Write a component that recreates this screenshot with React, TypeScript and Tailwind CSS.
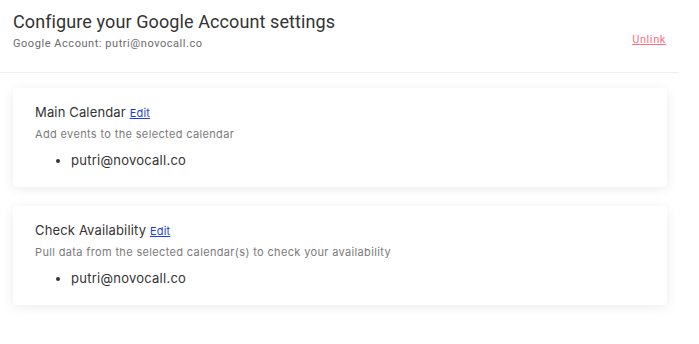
export default function App() {
  const calendars = [
    {
      title: 'Main Calendar',
      description: 'Add events to the selected calendar',
      emails: ['putri@novocall.co'],
    },
    {
      title: 'Check Availability',
      description: 'Pull data from the selected calendar(s) to check your availability',
      emails: ['putri@novocall.co'],
    },
  ];

  return (
    <div className="w-[699px] h-[344px] bg-white overflow-hidden font-['Inter',sans-serif]">
      <div className="w-[679px]">
        {/* Header */}
        <div className="flex items-start justify-between pl-[13px] pr-[13px] pt-[11px] h-[73px] border-b border-[#eeeeee]">
          <div>
            <h1 className="font-['Roboto',sans-serif] text-[18px] leading-[22px] tracking-[0.1px] text-[#333333]">
              Configure your Google Account settings
            </h1>
            <p className="mt-[3px] font-['Roboto',sans-serif] text-[11px] leading-[16px] tracking-[0.55px] text-[#6b6b6b]">
              Google Account: putri@novocall.co
            </p>
          </div>
          <a className="mt-[21px] font-['Roboto',sans-serif] text-[11px] leading-[16px] tracking-[0.6px] text-[#ff6b86] underline cursor-pointer">
            Unlink
          </a>
        </div>

        {/* Calendar cards */}
        <div className="pl-[13px] pr-[12px] pt-[15px] flex flex-col gap-[19px]">
          {calendars.map((c) => (
            <div
              key={c.title}
              className="bg-white rounded-[4px] shadow-[0_2px_12px_rgba(0,0,0,0.08)] pl-[22px] pr-[22px] pt-[14px] pb-[17px]"
            >
              <div className="text-[13px] leading-[20px] tracking-[0.15px] text-[#333333]">
                {c.title}{' '}
                <a className="text-[11px] tracking-[0.2px] text-[#1b3fd6] underline cursor-pointer">Edit</a>
              </div>
              <p className="mt-[2px] text-[11px] leading-[18px] tracking-[0.35px] text-[#7a7a7a]">{c.description}</p>
              <ul className="mt-[7px] pl-[36px] list-disc text-[13px] leading-[20px] tracking-[0.25px] text-[#333333]">
                {c.emails.map((e) => (
                  <li key={e}>{e}</li>
                ))}
              </ul>
            </div>
          ))}
        </div>
      </div>
    </div>
  );
}
